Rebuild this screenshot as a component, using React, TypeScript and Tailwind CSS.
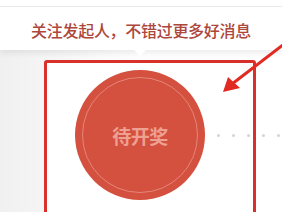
import React from "react";

export default function App() {
  return (
    <div className="w-[282px] h-[212px] bg-white relative overflow-hidden flex flex-col" style={{ fontFamily: '"Noto Sans CJK SC", "Noto Sans", sans-serif' }}>
      <div className="h-[7px] shrink-0 border-b border-[#ececec]" />
      <div className="relative z-10 h-[43px] shrink-0 bg-white flex items-center justify-center pt-[2px] shadow-[0_3px_6px_rgba(0,0,0,0.08)]">
        <span className="text-[16px] leading-none font-medium text-[#ad463b] tracking-[-0.3px]">关注发起人，不错过更多好消息</span>
        <div className="absolute left-[134px] top-[43px] w-0 h-0 border-l-[6px] border-r-[6px] border-t-[6px] border-l-transparent border-r-transparent border-t-white" />
      </div>
      <div className="flex-1 bg-gradient-to-r from-[#f0f0f0] via-white to-white pt-[10px] flex">
        <div className="ml-[44px] w-[212px] h-[160px] bg-white border-[3px] border-[#d8302a] rounded-[3px] relative">
          <div className="absolute left-[28px] top-[7px] w-[130px] h-[130px] rounded-full bg-[#d4503f] flex items-center justify-center">
            <div className="absolute inset-[7px] rounded-full border border-[#e6867a]" />
            <span className="text-[19px] leading-none font-bold text-[#eea092] tracking-[-0.5px]">待开奖</span>
          </div>
        </div>
      </div>
      <div className="absolute top-[134px] left-[217px] flex gap-[12px]">
        <span className="w-[3px] h-[3px] rounded-full bg-[#d4d4d4]" />
        <span className="w-[3px] h-[3px] rounded-full bg-[#d4d4d4]" />
        <span className="w-[3px] h-[3px] rounded-full bg-[#d4d4d4]" />
        <span className="w-[3px] h-[3px] rounded-full bg-[#d4d4d4]" />
        <span className="w-[3px] h-[3px] rounded-full bg-[#d4d4d4]" />
      </div>
      <svg className="absolute left-0 top-0 z-20" width="282" height="212" viewBox="0 0 282 212">
        <line x1="288" y1="41" x2="232" y2="84" stroke="#e02a22" strokeWidth="3" />
        <polygon points="223,92 228,77 240,88" fill="#e02a22" />
      </svg>
    </div>
  );
}
